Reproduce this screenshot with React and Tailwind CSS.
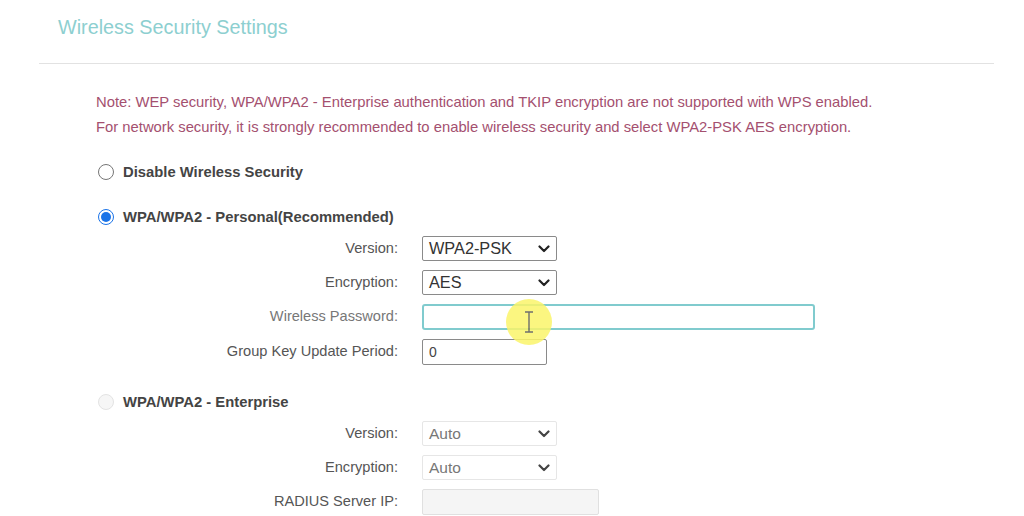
const font = { fontFamily: '"Liberation Sans", Arial, sans-serif' };

const Chevron = ({ light }) => (
  <svg width="12" height="8" viewBox="0 0 12 8" className="shrink-0">
    <path
      d="M1.5 1.5 L6 6 L10.5 1.5"
      fill="none"
      stroke={light ? "#444" : "#222"}
      strokeWidth="2.2"
      strokeLinecap="round"
      strokeLinejoin="round"
    />
  </svg>
);

const Radio = ({ state }) => {
  if (state === "on")
    return (
      <div className="w-4 h-4 rounded-full border border-[#1a73e8] flex items-center justify-center bg-white">
        <div className="w-[10px] h-[10px] rounded-full bg-[#1a73e8]" />
      </div>
    );
  if (state === "disabled")
    return <div className="w-4 h-4 rounded-full border border-[#e3e3e3] bg-[#f6f6f6]" />;
  return <div className="w-4 h-4 rounded-full border border-[#767676] bg-white" />;
};

const RadioRow = ({ state, label, className }) => (
  <div className={`flex items-center h-6 pl-[98px] gap-[9px] ${className}`}>
    <Radio state={state} />
    <span className="text-[14.8px] font-bold text-[#444]">{label}</span>
  </div>
);

const Field = ({ label, children, className, labelClass = "text-[#555]" }) => (
  <div className={`flex items-center ${className}`}>
    <div className={`w-[398px] text-right text-[14.6px] ${labelClass}`}>{label}</div>
    <div className="ml-[24px] flex">{children}</div>
  </div>
);

const Select = ({ value, disabled }) => (
  <div
    className={`w-[135px] h-[25px] flex items-center justify-between pl-[6px] pr-[6px] border ${
      disabled ? "border-[#e6e6e6] text-[#777] text-[15.5px]" : "border-[#8a8a8a] text-[#333] text-[16.3px]"
    } bg-white rounded-[2px]`}
  >
    <span>{value}</span>
    <Chevron light={disabled} />
  </div>
);

export default function App() {
  return (
    <div className="relative w-[1024px] h-[516px] overflow-hidden bg-white" style={font}>
      <div className="pt-[15px] pl-[58px] h-[39px] text-[19.8px] leading-[24px] text-[#8dcfd0]">
        Wireless Security Settings
      </div>
      <div className="mt-[24px] ml-[39px] mr-[30px] border-t border-[#e2e2e2]" />

      <div className="mt-[26px] pl-[96px] text-[14.8px] leading-[25px] text-[#a4506f]">
        <div>Note: WEP security, WPA/WPA2 - Enterprise authentication and TKIP encryption are not supported with WPS enabled.</div>
        <div>For network security, it is strongly recommended to enable wireless security and select WPA2-PSK AES encryption.</div>
      </div>

      <RadioRow state="off" label="Disable Wireless Security" className="mt-[20px]" />
      <RadioRow state="on" label="WPA/WPA2 - Personal(Recommended)" className="mt-[21px]" />

      <Field label="Version:" className="mt-[7px]">
        <Select value="WPA2-PSK" />
      </Field>
      <Field label="Encryption:" className="mt-[9px]">
        <Select value="AES" />
      </Field>
      <Field label="Wireless Password:" className="mt-[9px]" labelClass="text-[#777]">
        <div className="w-[393px] h-[26px] border-2 border-[#80cbce] rounded-[3px] bg-white" />
      </Field>
      <Field label="Group Key Update Period:" className="mt-[9px]">
        <div className="w-[125px] h-[26px] border border-[#8a8a8a] rounded-[2px] pl-[6px] flex items-center text-[14px] text-[#444]">
          0
        </div>
      </Field>

      <RadioRow state="disabled" label="WPA/WPA2 - Enterprise" className="mt-[25px]" />
      <Field label="Version:" className="mt-[7px]">
        <Select value="Auto" disabled />
      </Field>
      <Field label="Encryption:" className="mt-[9px]">
        <Select value="Auto" disabled />
      </Field>
      <Field label="RADIUS Server IP:" className="mt-[9px]">
        <div className="w-[177px] h-[26px] border border-[#e0e0e0] bg-[#f5f5f5] rounded-[2px]" />
      </Field>

      {/* cursor highlight */}
      <div className="absolute left-[506px] top-[299px] w-[46px] h-[46px] rounded-full bg-[#fbf56a] opacity-85 flex items-center justify-center">
        <svg width="10" height="22" viewBox="0 0 10 22">
          <path d="M1 1 H9 M5 1 V21 M1 21 H9" stroke="#555" strokeWidth="1.4" fill="none" />
        </svg>
      </div>
    </div>
  );
}
